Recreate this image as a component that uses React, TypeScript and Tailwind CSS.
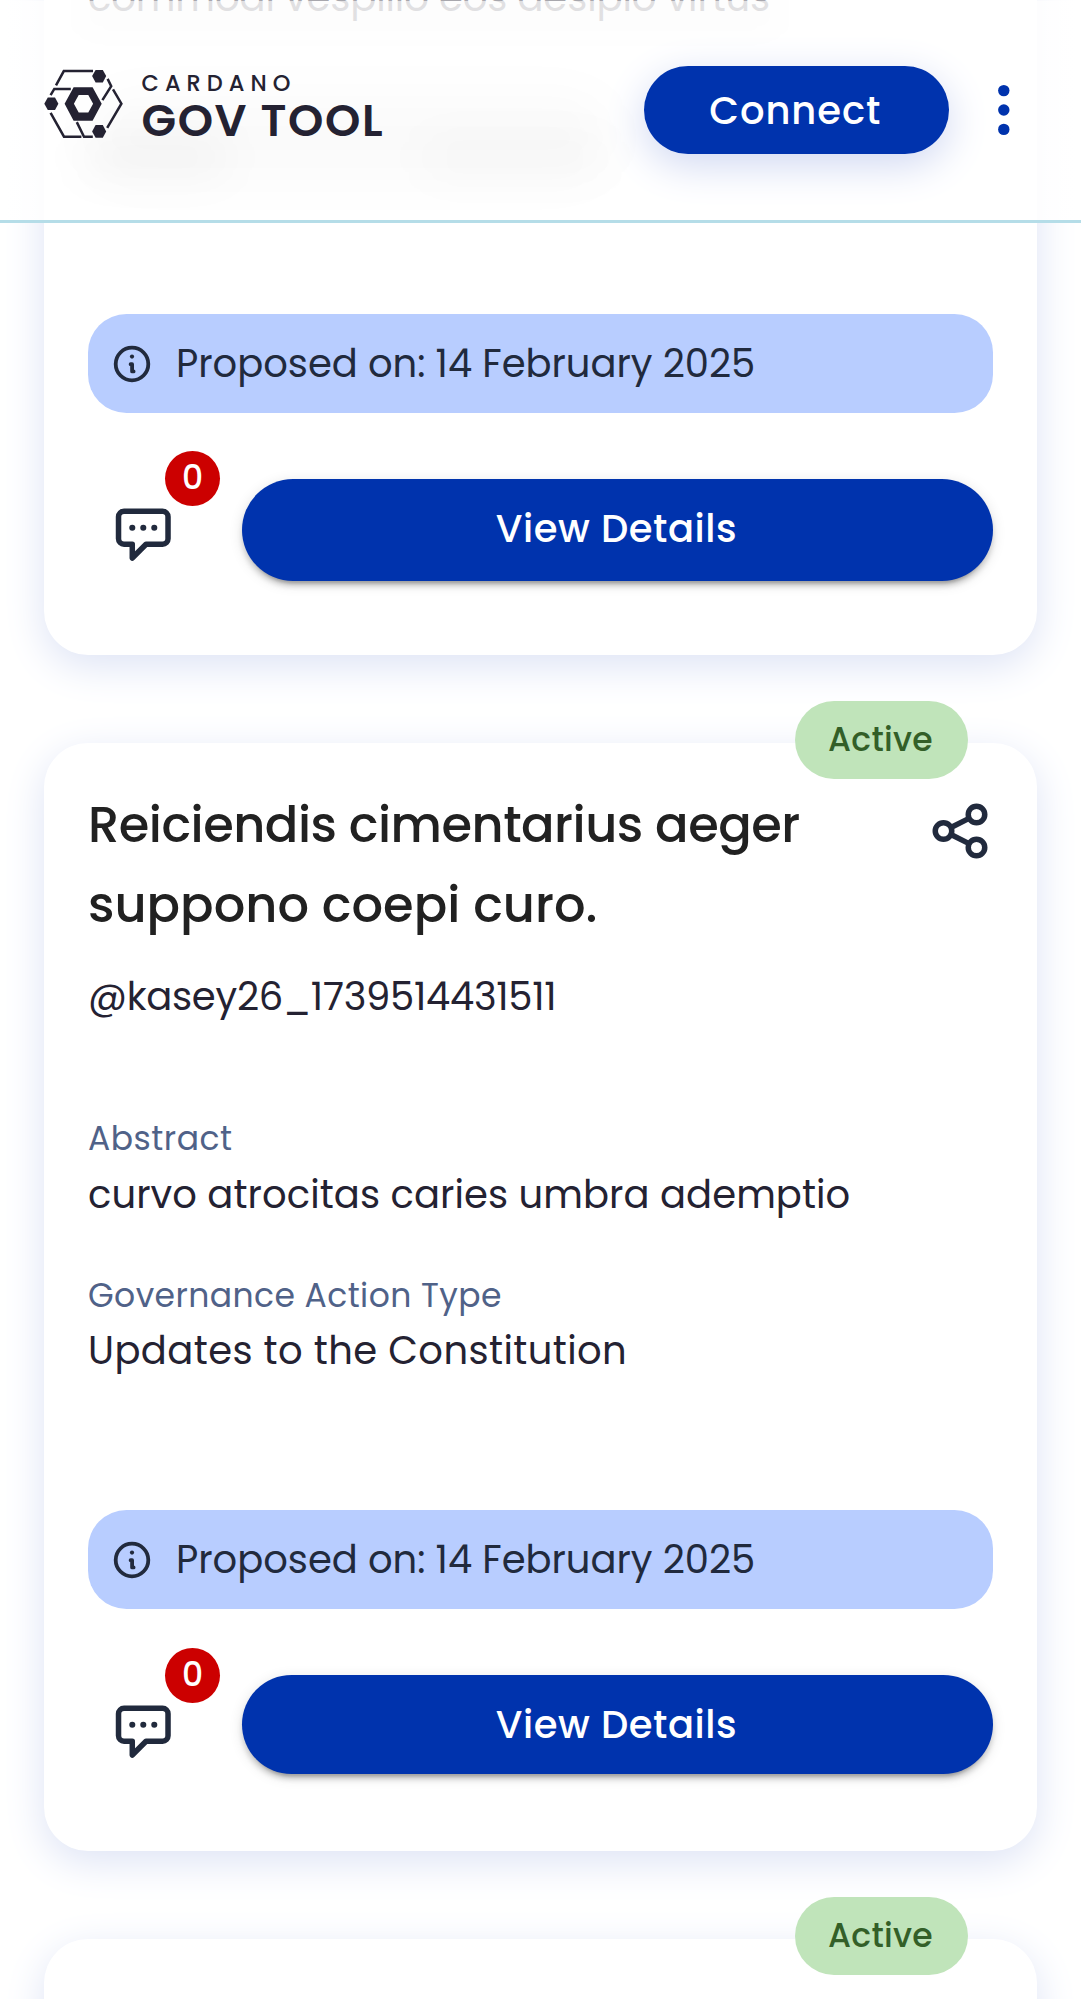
import type { ReactNode } from "react";

function LogoMark() {
  return (
    <svg width="80" height="70" viewBox="43 68.5 80 70" className="shrink-0" fill="none">
      <g stroke="#242232" strokeWidth="2.5">
        <path d="M56 84.8 63.8 70.6H93" />
        <path d="M50.6 94.6 54.3 88.4H70.8" />
        <path d="M50.6 112.4 64 136.2H81.4" />
        <path d="M76.8 121.6 84 136.2H92.8" />
        <path d="M113 88.8 121.4 103.2 107.2 127.4" />
        <path d="M107.6 78.4 111.2 85.6 102.4 99.6" />
      </g>
      <g fill="#242232">
        <path d="M95.6 69.4H102.8L106.2 75.6 102.8 81.9H95.6L92.1 75.6Z" />
        <path d="M95.6 124.6H102.8L106.2 130.9 102.8 137.2H95.6L92.1 130.9Z" />
        <path d="M47.8 97H55L58.4 103.3 55 109.6H47.8L44.3 103.3Z" />
        <path
          fillRule="evenodd"
          d="M73.6 86.7H92.6L101.7 103.3 92.6 120.2H73.6L64.6 103.3ZM78.7 94.6 73.9 103.3 78.7 112H88.3L93.1 103.3 88.3 94.6Z"
        />
      </g>
    </svg>
  );
}

function InfoIcon() {
  return (
    <svg width="44" height="44" viewBox="0 0 44 44" fill="none" stroke="#212A3D" strokeLinecap="round" strokeLinejoin="round">
      <circle cx="22" cy="22" r="16.3" strokeWidth="3.8" />
      <path d="M20.6 22.2H22.1V29.4H23.6" strokeWidth="3.8" />
      <circle cx="22" cy="14.6" r="2.1" fill="#212A3D" stroke="none" />
    </svg>
  );
}

function CommentIcon() {
  return (
    <svg width="66" height="66" viewBox="0 0 24 24" fill="none" stroke="#212A3D" strokeWidth="2" strokeLinecap="round" strokeLinejoin="round">
      <path d="M13 15 8 20V15H5a2 2 0 0 1-2-2V5a2 2 0 0 1 2-2h14a2 2 0 0 1 2 2v8a2 2 0 0 1-2 2Z" transform="translate(0.1 0)" />
      <path d="M8.1 9h.01M12.1 9h.01M16.1 9h.01" strokeWidth="2.2" />
    </svg>
  );
}

function ShareIcon() {
  return (
    <svg width="66" height="66" viewBox="0 0 24 24" fill="none" stroke="#212A3D" strokeWidth="2">
      <circle cx="18" cy="6" r="3" />
      <circle cx="6" cy="12" r="3" />
      <circle cx="18" cy="18" r="3" />
      <path d="M8.7 10.7 15.3 7.4M8.7 13.3 15.3 16.6" />
    </svg>
  );
}

function Header() {
  return (
    <header className="absolute inset-x-0 top-0 z-10 flex h-[223px] items-start justify-between overflow-hidden border-b-3 border-[#b5dde8] bg-[linear-gradient(to_bottom,rgba(255,255,255,0.61)_0px,rgba(255,255,255,0.61)_1px,rgba(255,255,255,0.87)_1px)] px-[44px]">
      <div className="pointer-events-none absolute top-[2px] left-[80px] h-[22px] w-[700px] rounded-full bg-black/2 blur-[18px]" />
      <div className="pointer-events-none absolute top-[138px] left-[80px] h-[38px] w-[150px] rounded-full bg-black/3 blur-[22px]" />
      <div className="pointer-events-none absolute top-[96px] left-[90px] h-[84px] w-[520px] rounded-full bg-black/2 blur-[24px]" />
      <div className="pointer-events-none absolute top-[138px] left-[420px] h-[38px] w-[190px] rounded-full bg-black/2 blur-[22px]" />

      <div className="relative mt-[69px] flex text-[#242232]">
        <div className="-ml-px">
          <LogoMark />
        </div>
        <div className="ml-[18.5px] whitespace-nowrap">
          <div className="text-[22.5px] leading-[28px] font-medium tracking-[6px]">CARDANO</div>
          <div className="text-[45px] leading-[48px] font-semibold tracking-[1.6px]">GOV TOOL</div>
        </div>
      </div>

      <div className="relative mt-[66px] flex items-center gap-[22px]">
        <button className="h-[88px] w-[305.5px] rounded-full bg-[#0033ad] pt-px pr-[2px] text-[38.5px] leading-[88px] font-medium tracking-[0.9px] text-white shadow-[0px_11px_41px_0px_#d0d8f2]">
          Connect
        </button>
        <svg width="66" height="66" viewBox="0 0 66 66" fill="#0033ad">
          <circle cx="32.8" cy="13.6" r="5.7" />
          <circle cx="32.8" cy="33" r="5.7" />
          <circle cx="32.8" cy="52.4" r="5.7" />
        </svg>
      </div>
    </header>
  );
}

function StatusPill() {
  return (
    <div className="absolute -top-[42px] right-[69px] h-[78px] w-[173px] rounded-full bg-[#c0e4ba] pr-[2px] text-center text-[33px] leading-[78px] font-medium tracking-[0.3px] text-[#335f28]">
      Active
    </div>
  );
}

function Value({ children, className }: { children: ReactNode; className: string }) {
  return <p className={`text-[38.5px] leading-[58px] whitespace-nowrap text-[#242232] ${className}`}>{children}</p>;
}

function Label({ children, className }: { children: ReactNode; className: string }) {
  return <p className={`text-[33px] leading-[49px] whitespace-nowrap text-[#506288] ${className}`}>{children}</p>;
}

function CardFooter({ buttonClass, commentClass }: { buttonClass: string; commentClass: string }) {
  return (
    <div className="mt-auto">
      <div className="flex h-[99px] items-center gap-[22px] rounded-[38.5px] bg-[#b8cdff] pl-[22px] text-[38.5px] text-[#212A3D]">
        <InfoIcon />
        <span className="tracking-[-0.03px]">Proposed on: 14 February 2025</span>
      </div>
      <div className="mt-[66px] flex items-start gap-[44px]">
        <div className={`relative w-[110px] pt-[22px] pl-[21.5px] ${commentClass}`}>
          <CommentIcon />
          <span className="absolute -top-[30px] left-[77px] size-[55px] rounded-full bg-[#cc0000] text-center text-[33px] leading-[54px] font-medium text-white">
            0
          </span>
        </div>
        <button
          className={`flex-1 rounded-full bg-[#0033ad] pr-[2px] text-[38.5px] font-medium tracking-[0.54px] text-white shadow-[0px_8px_3px_-5.5px_rgba(0,0,0,0.2),0px_5.5px_5.5px_0px_rgba(0,0,0,0.14),0px_3px_14px_0px_rgba(0,0,0,0.12)] ${buttonClass}`}
        >
          View Details
        </button>
      </div>
    </div>
  );
}

export default function App() {
  return (
    <div className="relative h-[1999px] w-[1081px] overflow-hidden bg-white font-['Poppins','Inter',sans-serif]">
      <Header />
      <main className="-mt-[60px] flex flex-col gap-[88px] px-[44px]">
        <section className="flex h-[715px] shrink-0 flex-col rounded-b-[44px] bg-white px-[44px] pb-[74.5px] shadow-[0px_11px_41px_0px_#dde3f5]">
          <Value className="mt-[29px] tracking-[-0.1px]">commodi vespilio eos desipio virtus</Value>
          <CardFooter buttonClass="h-[101.5px] pb-[2.5px] leading-[99px]" commentClass="mt-[2px]" />
        </section>

        <section className="relative flex h-[1108px] shrink-0 flex-col rounded-[44px] bg-white px-[44px] pt-[42px] pb-[77px] shadow-[0px_11px_41px_0px_#dde3f5]">
          <StatusPill />
          <div className="flex items-start justify-between">
            <h2 className="text-[49.5px] leading-[80px] font-medium whitespace-nowrap text-[#212121]">
              <span className="block tracking-[-0.5px]">Reiciendis cimentarius aeger</span>
              <span className="block">suppono coepi curo.</span>
            </h2>
            <div className="mt-[12.5px]">
              <ShareIcon />
            </div>
          </div>
          <Value className="mt-[23px] tracking-[-0.27px]">@kasey26_1739514431511</Value>
          <Label className="mt-[88px] tracking-[0.51px]">Abstract</Label>
          <Value className="mt-[3px] tracking-[0.08px]">curvo atrocitas caries umbra ademptio</Value>
          <Label className="mt-[47px] tracking-[0.42px]">Governance Action Type</Label>
          <Value className="mt-[2px] tracking-[0.41px]">Updates to the Constitution</Value>
          <CardFooter buttonClass="h-[99px] leading-[99px]" commentClass="mt-[3px]" />
        </section>

        <section className="relative h-[400px] shrink-0 rounded-[44px] bg-white shadow-[0px_11px_41px_0px_#dde3f5]">
          <StatusPill />
        </section>
      </main>
    </div>
  );
}
